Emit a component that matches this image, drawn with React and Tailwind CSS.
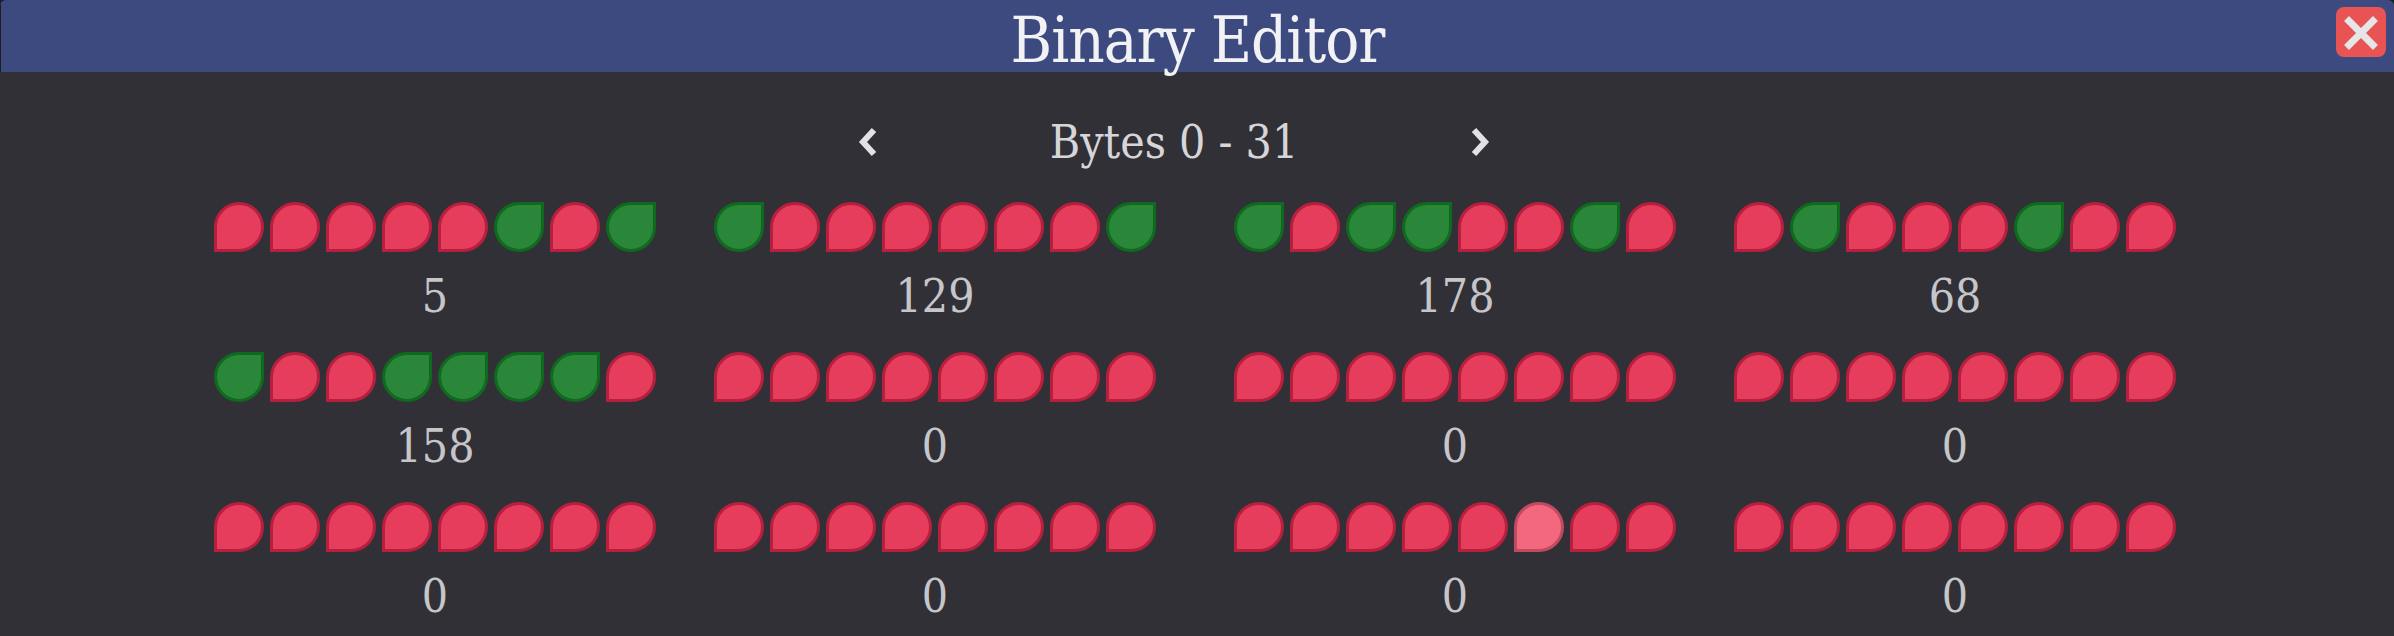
import React from "react";

const BYTES = [5, 129, 178, 68, 158, 0, 0, 0, 0, 0, 0, 0];

function Bit({ on, hot }) {
  let cls;
  if (on) cls = "bg-[#2a8739] border-[#0f6a1f] rounded-tr-none";
  else if (hot) cls = "bg-[#f4687f] border-[#c04b60] rounded-bl-none";
  else cls = "bg-[#e73d5c] border-[#b71f3e] rounded-bl-none";
  return <div className={"w-[50px] h-[50px] rounded-[25px] border-[3px] " + cls} />;
}

function ByteCell({ value, hotBit }) {
  const bits = [];
  for (let i = 7; i >= 0; i--) bits.push((value >> i) & 1);
  return (
    <div className="flex flex-col items-center w-[442px] h-[150px]">
      <div className="flex gap-[6px]">
        {bits.map((b, i) => (
          <Bit key={i} on={b === 1} hot={hotBit === i} />
        ))}
      </div>
      <div className="mt-[21px] text-[46px] leading-none text-[#c6c6ca] font-stretch-condensed">
        {value}
      </div>
    </div>
  );
}

function Chevron({ dir }) {
  return (
    <svg width="20" height="30" viewBox="0 0 20 30" className="block">
      <path
        d={dir === "left" ? "M16 3 L5 15 L16 27" : "M4 3 L15 15 L4 27"}
        fill="none"
        stroke="#e2e2e4"
        strokeWidth="6"
        strokeLinejoin="miter"
      />
    </svg>
  );
}

function Row({ values, hot }) {
  return (
    <div className="flex justify-center pr-[4px]">
      <div className="flex gap-[58px]">
        <ByteCell value={values[0]} hotBit={hot === 0 ? 5 : -1} />
        <ByteCell value={values[1]} hotBit={hot === 1 ? 5 : -1} />
      </div>
      <div className="flex gap-[58px] ml-[78px]">
        <ByteCell value={values[2]} hotBit={hot === 2 ? 5 : -1} />
        <ByteCell value={values[3]} hotBit={hot === 3 ? 5 : -1} />
      </div>
    </div>
  );
}

export default function App() {
  return (
    <div className="w-[2394px] h-[636px] overflow-hidden bg-[#1c1c21] font-['DejaVu_Serif',serif]">
      <div className="h-full bg-[#313037] rounded-t-[6px] overflow-hidden">
        <div className="relative h-[72px] bg-[#3d4a80] border-l border-[#1c1c21] flex justify-center">
          <div className="mt-[9px] text-[63px] leading-none tracking-[-1px] text-[#f2f2f4] font-stretch-condensed whitespace-nowrap">
            Binary Editor
          </div>
          <button className="absolute right-[8px] top-[7px] w-[50px] h-[50px] rounded-[8px] bg-[#e85454] flex items-center justify-center">
            <svg width="50" height="50" viewBox="0 0 50 50">
              <path d="M13 14 L37 38 M37 14 L13 38" stroke="#e6e6e8" strokeWidth="7" strokeLinecap="square" />
            </svg>
          </button>
        </div>
        <div className="flex justify-center items-center pr-[46px] mt-[47px] h-[45px]">
          <div className="flex items-center gap-[171px]">
            <Chevron dir="left" />
            <div className="w-[250px] flex justify-center">
              <span className="whitespace-nowrap text-[46px] leading-none text-[#d6d6d8] font-stretch-condensed">
                Bytes 0 - 31
              </span>
            </div>
            <Chevron dir="right" />
          </div>
        </div>
        <div className="mt-[38px]">
          <Row values={BYTES.slice(0, 4)} />
          <Row values={BYTES.slice(4, 8)} />
          <Row values={BYTES.slice(8, 12)} hot={2} />
        </div>
      </div>
    </div>
  );
}
